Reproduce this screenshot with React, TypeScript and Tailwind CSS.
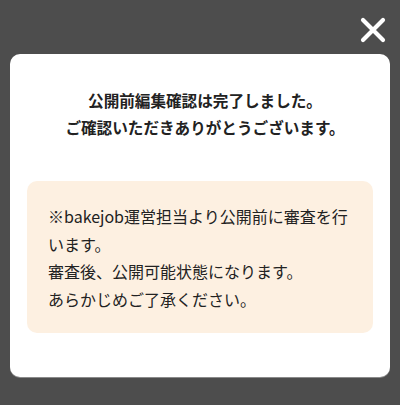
import React from 'react';

const CloseIcon = () => (
  <svg width="26" height="26" viewBox="0 0 26 26" fill="none">
    <path d="M3 3L23 23M23 3L3 23" stroke="#ffffff" strokeWidth="4.2" strokeLinecap="round" />
  </svg>
);

const App: React.FC = () => {
  return (
    <div
      className="w-[400px] h-[405px] bg-[#4d4d4d] flex flex-col"
      style={{ fontFamily: '"Noto Sans CJK JP", "Noto Sans", sans-serif' }}
    >
      <div className="flex justify-end pt-[17px] pr-[14px] h-[54px]">
        <button className="w-[26px] h-[26px]">
          <CloseIcon />
        </button>
      </div>

      <div className="mx-[10px] w-[380px] bg-white rounded-[10px] shadow-[0_1px_0_#8a8a8a] pt-[33px] pb-[44px] px-[17px]">
        <p className="text-center text-[15.6px] leading-[27px] font-bold text-[#222] pl-[10px]">
          公開前編集確認は完了しました。
          <br />
          ご確認いただきありがとうございます。
        </p>

        <div className="mt-[40px] bg-[#fdf0e1] rounded-[10px] pt-[22px] pb-[20px] pl-[21px] pr-[18px] text-[16px] leading-[27.5px] text-[#222]">
          <p>※bakejob運営担当より公開前に審査を行います。</p>
          <p>審査後、公開可能状態になります。</p>
          <p>あらかじめご了承ください。</p>
        </div>
      </div>
    </div>
  );
};

export default App;
